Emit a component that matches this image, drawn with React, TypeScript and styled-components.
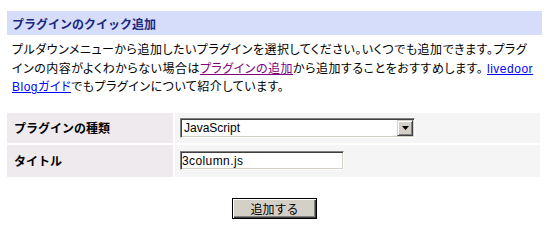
import React from "react";
import styled, { createGlobalStyle } from "styled-components";

const Global = createGlobalStyle`
  html, body { margin: 0; padding: 0; background: #ffffff; }
  body {
    font-family: "Liberation Sans", "Noto Sans CJK JP", sans-serif;
    font-size: 12px;
    color: #000;
  }
`;

const Page = styled.div`
  width: 535px;
  margin: 11px 0 0 7px;
`;

const Heading = styled.h2`
  margin: 0;
  height: 24px;
  display: flex;
  align-items: center;
  padding: 0 5px;
  background: #d6ddfa;
  color: #1b2780;
  font-size: 12px;
  font-weight: bold;
`;

const Intro = styled.p`
  margin: 6px 0 0;
  padding: 0 5px;
  line-height: 18.6px;
  font-feature-settings: "palt";
  letter-spacing: 0.5px;
  white-space: nowrap;
`;

const Link = styled.a<{ $visited?: boolean }>`
  color: ${(p) => (p.$visited ? "#800080" : "#0000ff")};
  text-decoration: underline;
`;

const Form = styled.form`
  margin-top: 16px;
`;

const Table = styled.div`
  display: grid;
  grid-template-columns: 166px 365px;
  gap: 2px;
`;

const Label = styled.div<{ $h: number }>`
  height: ${(p) => p.$h}px;
  display: flex;
  align-items: center;
  padding-left: 7px;
  background: #eeeaee;
  font-weight: bold;
`;

const Value = styled.div<{ $h: number }>`
  height: ${(p) => p.$h}px;
  display: flex;
  align-items: center;
  padding-left: 5px;
  background: #f5f5f5;
`;

const SelectWrap = styled.div`
  position: relative;
  width: 235px;
  height: 20px;
`;

const Select = styled.select`
  appearance: none;
  width: 100%;
  height: 100%;
  box-sizing: border-box;
  margin: 0;
  padding: 0 0 0 3px;
  border: 1px solid;
  border-color: #808080 #ffffff #ffffff #808080;
  box-shadow: inset 1px 1px #404040, inset -1px -1px #d4d0c8;
  background: #fff;
  font-family: "Liberation Sans", Arial, sans-serif;
  font-size: 12px;
  color: #000;
  border-radius: 0;
  outline: none;
`;

const ArrowButton = styled.span`
  position: absolute;
  top: 2px;
  right: 2px;
  width: 16px;
  height: 16px;
  box-sizing: border-box;
  background: #d4d0c8;
  border: 1px solid;
  border-color: #d4d0c8 #404040 #404040 #d4d0c8;
  box-shadow: inset 1px 1px #ffffff, inset -1px -1px #808080;
  display: flex;
  align-items: center;
  justify-content: center;
  pointer-events: none;
`;

const TextInput = styled.input`
  width: 164px;
  height: 19px;
  box-sizing: border-box;
  margin: 0;
  padding: 0 0 0 1px;
  border: 1px solid;
  border-color: #808080 #ffffff #ffffff #808080;
  box-shadow: inset 1px 1px #404040, inset -1px -1px #d4d0c8;
  background: #fff;
  font-family: "Liberation Sans", Arial, sans-serif;
  font-size: 12px;
  letter-spacing: 0.4px;
  color: #000;
  outline: none;
  border-radius: 0;
`;

const Actions = styled.div`
  display: flex;
  justify-content: center;
  margin-top: 21px;
`;

const Button = styled.button`
  width: 85px;
  height: 21px;
  box-sizing: border-box;
  margin: 0;
  padding: 0;
  background: #d4d0c8;
  border: 1px solid #000;
  box-shadow: inset 1px 1px #ffffff, inset -1px -1px #404040, inset -2px -2px #808080;
  font-family: "Noto Sans CJK JP", sans-serif;
  font-size: 12px;
  color: #000;
  border-radius: 0;
`;

export default function App() {
  return (
    <>
      <Global />
      <Page>
        <Heading>プラグインのクイック追加</Heading>
        <Intro>
          プルダウンメニューから追加したいプラグインを選択してください。いくつでも追加できます。プラグ
          <br />
          インの内容がよくわからない場合は
          <Link $visited href="#">プラグインの追加</Link>
          から追加することをおすすめします。 <Link href="#">livedoor<br />Blogガイド</Link>
          でもプラグインについて紹介しています。
        </Intro>
        <Form onSubmit={(e) => e.preventDefault()}>
          <Table>
            <Label $h={30}>プラグインの種類</Label>
            <Value $h={30}>
              <SelectWrap>
                <Select defaultValue="JavaScript">
                  <option>JavaScript</option>
                </Select>
                <ArrowButton>
                  <svg width="7" height="4" viewBox="0 0 7 4">
                    <path d="M0 0h7L3.5 4z" fill="#000" />
                  </svg>
                </ArrowButton>
              </SelectWrap>
            </Value>
            <Label $h={32}>タイトル</Label>
            <Value $h={32}>
              <TextInput defaultValue="3column.js" />
            </Value>
          </Table>
          <Actions>
            <Button type="submit">追加する</Button>
          </Actions>
        </Form>
      </Page>
    </>
  );
}
